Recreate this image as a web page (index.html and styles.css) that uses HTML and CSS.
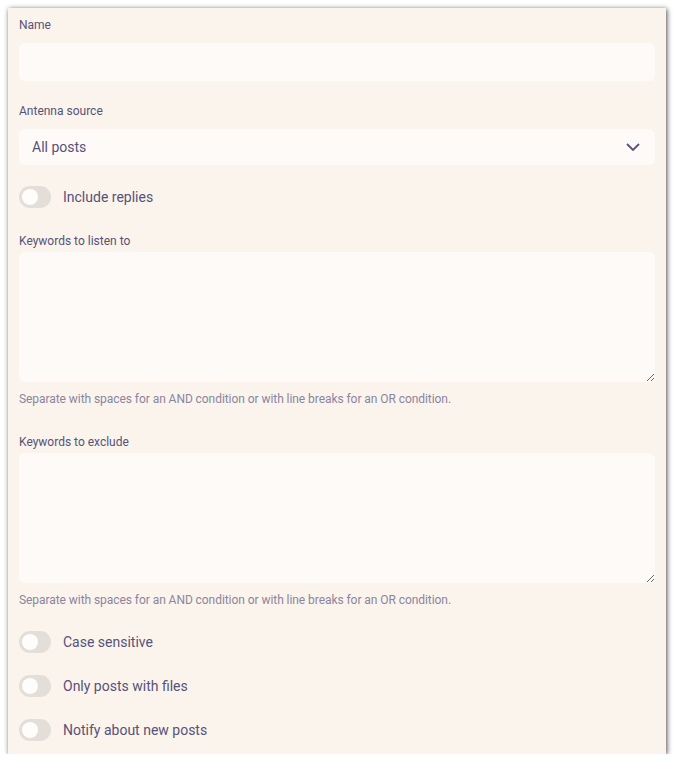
FILE: index.html
```html
<!DOCTYPE html>
<html lang="en">
<head>
    <meta charset="UTF-8">
    <meta name="viewport" content="width=device-width, initial-scale=1.0">
    <title>Antenna settings</title>
    <link rel="stylesheet" href="styles.css">
</head>
<body>
    <div class="panel">
        <label class="label" for="name">Name</label>
        <input class="input" id="name" type="text">

        <div class="label label-gap">Antenna source</div>
        <div class="select">
            <span>All posts</span>
            <svg class="chevron" width="14" height="8" viewBox="0 0 14 8">
                <path d="M1 1 L7 7 L13 1" fill="none" stroke="#575279" stroke-width="1.8"/>
            </svg>
        </div>

        <div class="switch-row first-switch">
            <span class="switch"><span class="knob"></span></span>
            <span class="switch-text">Include replies</span>
        </div>

        <div class="label area-label">Keywords to listen to</div>
        <textarea class="area"></textarea>
        <div class="caption">Separate with spaces for an AND condition or with line breaks for an OR condition.</div>

        <div class="label area-label second-area">Keywords to exclude</div>
        <textarea class="area"></textarea>
        <div class="caption">Separate with spaces for an AND condition or with line breaks for an OR condition.</div>

        <div class="switch-row after-caption">
            <span class="switch"><span class="knob"></span></span>
            <span class="switch-text">Case sensitive</span>
        </div>
        <div class="switch-row">
            <span class="switch"><span class="knob"></span></span>
            <span class="switch-text">Only posts with files</span>
        </div>
        <div class="switch-row">
            <span class="switch"><span class="knob"></span></span>
            <span class="switch-text">Notify about new posts</span>
        </div>
    </div>
</body>
</html>
```

FILE: styles.css
```css
body {
    margin: 0;
    background: #fff;
    font-family: Roboto, "Liberation Sans", sans-serif;
    color: #575279;
}
.panel {
    margin: 8px 0 0 8px;
    width: 658px;
    height: 746px;
    box-sizing: border-box;
    padding: 8px 11px 0;
    background: #faf4ed;
    box-shadow: 1px 1px 5px rgba(0,0,0,0.7);
}
.label {
    display: block;
    font-size: 12px;
    line-height: 18px;
    margin-bottom: 9px;
}
.label-gap {
    margin-top: 21px;
}
.input,
.select,
.area {
    display: block;
    width: 100%;
    box-sizing: border-box;
    border: none;
    border-radius: 6px;
    background: #fdfaf7;
    outline: none;
}
.input {
    height: 38px;
}
.select {
    height: 36px;
    padding: 0 15px 0 13px;
    display: flex;
    align-items: center;
    justify-content: space-between;
    font-size: 14px;
}
.switch-row {
    display: flex;
    align-items: center;
    height: 22px;
    margin-top: 22px;
}
.first-switch {
    margin-top: 21px;
}
.after-caption {
    margin-top: 22px;
}
.switch {
    width: 32px;
    height: 22px;
    border-radius: 11px;
    background: #e3ded8;
    display: flex;
    align-items: center;
    padding-left: 3px;
    box-sizing: border-box;
}
.knob {
    width: 16px;
    height: 16px;
    border-radius: 50%;
    background: #fffdfb;
}
.switch-text {
    margin-left: 12px;
    font-size: 14px;
}
.area-label {
    margin-top: 24px;
    margin-bottom: 2px;
}
.second-area {
    margin-top: 25px;
}
.area {
    height: 130px;
    resize: vertical;
    font-family: inherit;
}
.caption {
    margin-top: 8px;
    font-size: 12px;
    line-height: 18px;
    letter-spacing: -0.06px;
    color: #8a85a0;
}
```
